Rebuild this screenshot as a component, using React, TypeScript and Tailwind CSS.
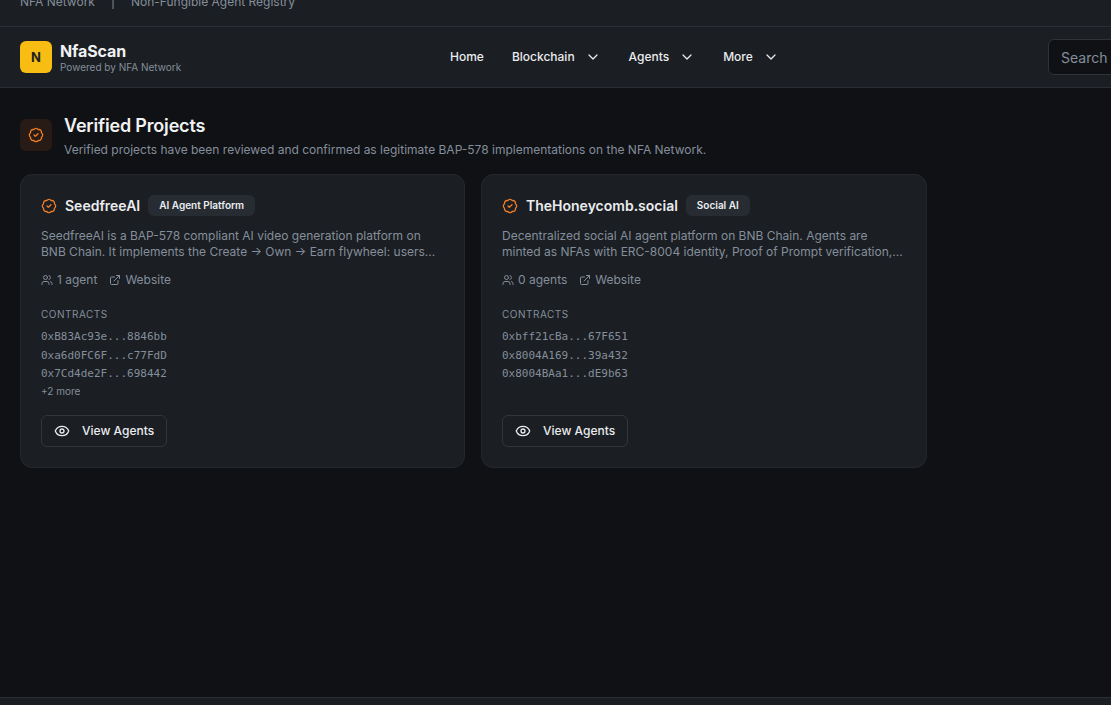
import { BadgeCheck, ChevronDown, ExternalLink, Eye, Users } from "lucide-react";

type Project = {
  name: string;
  category: string;
  description: string[];
  agents: string;
  contracts: string[];
  more?: string;
};

const projects: Project[] = [
  {
    name: "SeedfreeAI",
    category: "AI Agent Platform",
    description: [
      "SeedfreeAI is a BAP-578 compliant AI video generation platform on",
      "BNB Chain. It implements the Create → Own → Earn flywheel: users...",
    ],
    agents: "1 agent",
    contracts: ["0xB83Ac93e...8846bb", "0xa6d0FC6F...c77FdD", "0x7Cd4de2F...698442"],
    more: "+2 more",
  },
  {
    name: "TheHoneycomb.social",
    category: "Social AI",
    description: [
      "Decentralized social AI agent platform on BNB Chain. Agents are",
      "minted as NFAs with ERC-8004 identity, Proof of Prompt verification,...",
    ],
    agents: "0 agents",
    contracts: ["0xbff21cBa...67F651", "0x8004A169...39a432", "0x8004BAa1...dE9b63"],
  },
];

const menus = ["Blockchain", "Agents", "More"];

function TopBar() {
  return (
    <div className="flex h-[27px] shrink-0 items-end border-b border-[#2b2f35] bg-[#1b1e22] px-5 pb-[14px] text-xs leading-5 text-[#848e9c]">
      <span>NFA Network</span>
      <span className="w-[36px] text-center">|</span>
      <span>Non-Fungible Agent Registry</span>
    </div>
  );
}

function Header() {
  return (
    <header className="flex h-[61px] shrink-0 items-center border-b border-[#2b2f35] bg-[#1b1e22] pl-5">
      <div className="flex w-[430px] shrink-0 items-center gap-2">
        <div className="flex size-8 items-center justify-center rounded-md bg-[#f8bd12] pt-px text-[13px] font-bold text-[#1b1e22]">
          N
        </div>
        <div className="pt-0.5">
          <p className="text-base leading-[18px] font-bold tracking-[-0.1px] text-[#f0f1f2]">NfaScan</p>
          <p className="text-[10px] leading-[14px] text-[#848e9c]">Powered by NFA Network</p>
        </div>
      </div>
      <nav className="flex w-[598px] shrink-0 items-center gap-7 text-xs font-medium text-[#eaecef]">
        <a>Home</a>
        {menus.map((menu) => (
          <button key={menu} className="flex items-center gap-2.5">
            {menu}
            <ChevronDown className="size-4" strokeWidth={1.9} />
          </button>
        ))}
      </nav>
      <div className="flex h-9 w-[300px] shrink-0 items-center rounded-md border border-[#2f3338] bg-[#101114] px-3 pt-0.5 text-sm text-[#848e9c]">
        Search
      </div>
    </header>
  );
}

function ProjectCard({ project }: { project: Project }) {
  return (
    <article className="flex h-[294px] flex-col items-start rounded-xl border border-[#24282c] bg-[#1b1e22] p-5">
      <div className="flex h-[21px] items-center">
        <BadgeCheck className="size-4 text-[#ef7d27]" />
        <h2 className="ml-2 text-sm font-semibold text-[#eaecef]">{project.name}</h2>
        <span className="ml-2 flex h-[21px] items-center rounded-md bg-[#272c33] px-[11px] text-[10px] font-semibold text-[#eaecef]">
          {project.category}
        </span>
      </div>
      <p className="mt-3 text-xs leading-4 whitespace-nowrap text-[#848e9c]">
        {project.description[0]}
        <br />
        {project.description[1]}
      </p>
      <div className="mt-3 flex h-4 items-center gap-3 text-xs text-[#848e9c]">
        <span className="flex items-center gap-1">
          <Users className="size-3" />
          {project.agents}
        </span>
        <a className="flex items-center gap-1">
          <ExternalLink className="size-3" />
          Website
        </a>
      </div>
      <p className="mt-[19px] text-[10px] leading-[14px] tracking-[0.5px] text-[#848e9c]">CONTRACTS</p>
      <ul className="mt-[7px] font-['DejaVu_Sans_Mono',monospace] text-[11px] leading-[18.5px] text-[#848e9c]">
        {project.contracts.map((contract) => (
          <li key={contract}>{contract}</li>
        ))}
      </ul>
      {project.more && (
        <p className="-mt-0.5 text-[10px] leading-[18px] text-[#848e9c]">{project.more}</p>
      )}
      <button className="mt-auto flex h-8 w-[126px] items-center gap-3 rounded-md border border-[#32363b] pl-3 text-xs font-medium whitespace-nowrap text-[#eaecef]">
        <Eye className="size-4" />
        View Agents
      </button>
    </article>
  );
}

export default function App() {
  return (
    <div className="flex h-[705px] w-[1111px] flex-col overflow-hidden bg-[#101114] font-[Inter,sans-serif]">
      <TopBar />
      <Header />
      <main className="flex-1 px-5 pt-[27px]">
        <div className="flex items-start gap-3">
          <div className="mt-1 flex size-8 items-center justify-center rounded-md bg-[#281b15]">
            <BadgeCheck className="size-4 text-[#ef7d27]" />
          </div>
          <div>
            <h1 className="text-lg leading-[22px] font-semibold tracking-[-0.18px] text-[#f0f1f2]">Verified Projects</h1>
            <p className="mt-1 text-xs leading-[18px] text-[#848e9c]">
              Verified projects have been reviewed and confirmed as legitimate BAP-578 implementations on the NFA Network.
            </p>
          </div>
        </div>
        <div className="mt-[15px] grid grid-cols-[445px_446px] gap-4">
          {projects.map((project) => (
            <ProjectCard key={project.name} project={project} />
          ))}
        </div>
      </main>
      <footer className="h-2 shrink-0 border-t border-[#2b2f35] bg-[#1b1e22]" />
    </div>
  );
}
